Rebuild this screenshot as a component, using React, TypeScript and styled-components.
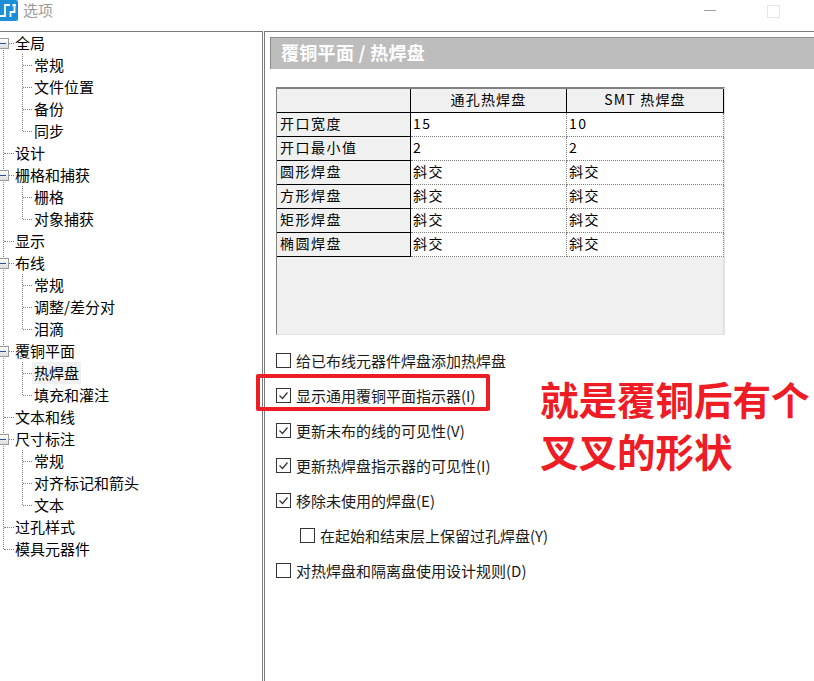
import React from 'react';
import styled, { createGlobalStyle } from 'styled-components';

const colors = {
  border: '#7a7a7a',
  dotted: '#808080',
  headerBg: '#bdbdbd',
  cellBg: '#f0f0f0',
  red: '#ee1c25',
  text: '#000000',
};

const cjk = '"Noto Sans CJK SC", "Liberation Sans", sans-serif';

const GlobalStyle = createGlobalStyle`
  html, body {
    margin: 0;
    padding: 0;
    height: 100%;
    background: #ffffff;
    overflow: hidden;
  }
  #root {
    height: 100%;
  }
`;

const Window = styled.div`
  width: 814px;
  height: 681px;
  display: flex;
  flex-direction: column;
  font-family: ${cjk};
  color: ${colors.text};
  overflow: hidden;
`;

const TitleBar = styled.div`
  height: 31px;
  flex: none;
  display: flex;
  align-items: flex-start;
  gap: 5px;
  box-sizing: border-box;
`;

const AppIcon = styled.svg`
  width: 18px;
  height: 21px;
  flex: none;
`;

const WindowTitle = styled.span`
  font-size: 15px;
  line-height: 20px;
  color: #9b9b9b;
  flex: 1;
`;

const MinimizeButton = styled.div`
  width: 12px;
  height: 1px;
  background: #a0a0a0;
  margin: 10px 46px 0 0;
`;

const MaximizeButton = styled.div`
  width: 11px;
  height: 11px;
  border: 1px solid #e6e6e6;
  margin: 5px 34px 0 0;
`;

const Body = styled.div`
  flex: 1;
  display: flex;
  min-height: 0;
`;

const TreePanel = styled.div`
  width: 263px;
  flex: none;
  box-sizing: border-box;
  border-top: 1px solid ${colors.border};
  border-right: 1px solid ${colors.border};
  overflow: hidden;
`;

const TreeRoot = styled.div`
  position: relative;
  &::before {
    content: '';
    position: absolute;
    left: 3px;
    top: 11px;
    bottom: 11px;
    border-left: 1px dotted ${colors.dotted};
  }
`;

const ChildList = styled.div`
  position: relative;
  &::before {
    content: '';
    position: absolute;
    left: 22px;
    top: 0;
    bottom: 11px;
    border-left: 1px dotted ${colors.dotted};
  }
`;

const TreeRow = styled.div<{ $child?: boolean }>`
  position: relative;
  height: 22px;
  display: flex;
  align-items: center;
  padding-left: ${props => (props.$child ? 34 : 15)}px;
  &::before {
    content: '';
    position: absolute;
    left: ${props => (props.$child ? 23 : 4)}px;
    width: ${props => (props.$child ? 9 : 10)}px;
    top: 11px;
    border-top: 1px dotted ${colors.dotted};
  }
`;

const TreeLabel = styled.span<{ $selected?: boolean }>`
  font-size: 15px;
  line-height: 22px;
  white-space: nowrap;
  background: ${props => (props.$selected ? '#f0f0f0' : 'transparent')};
  margin-left: ${props => (props.$selected ? -2 : 0)}px;
  padding: ${props => (props.$selected ? '0 2px' : '0')};
  position: relative;
`;

const Expander = styled.div`
  position: absolute;
  left: -3px;
  top: 6px;
  width: 10px;
  height: 9px;
  border: 1px solid #9a9a9a;
  background: linear-gradient(#ffffff, #dcdcdc);
  z-index: 1;
  &::after {
    content: '';
    position: absolute;
    left: 2px;
    right: 2px;
    top: 4px;
    height: 1px;
    background: #2b4f9b;
  }
`;

const ContentPanel = styled.div`
  flex: 1;
  margin-left: 1px;
  position: relative;
  box-sizing: border-box;
  border-top: 1px solid ${colors.border};
  border-left: 1px solid ${colors.border};
  padding: 5px 0 0 5px;
`;

const SectionHeader = styled.div`
  height: 32px;
  box-sizing: border-box;
  background: ${colors.headerBg};
  border-top: 1px solid #8c8c8c;
  border-left: 1px solid #8c8c8c;
  padding-left: 10px;
  color: #ffffff;
  font-size: 18px;
  font-weight: 700;
  line-height: 28px;
  letter-spacing: 0.3px;
  white-space: nowrap;
`;

const TableFrame = styled.div`
  width: 449px;
  height: 248px;
  margin: 18px 0 0 6px;
  box-sizing: border-box;
  background: ${colors.cellBg};
  border-top: 2px solid #808080;
  border-left: 1px solid #808080;
  border-right: 2px solid #e2e2e2;
  border-bottom: 1px solid #e2e2e2;
`;

const TableGrid = styled.div`
  display: grid;
  grid-template-columns: 134px 156px 157px;
  grid-auto-rows: 24px;
`;

const HeaderCell = styled.div`
  box-sizing: border-box;
  border-right: 1px solid #000000;
  border-bottom: 1px solid #000000;
  background: ${colors.cellBg};
  text-align: center;
  font-size: 14px;
  line-height: 20px;
  letter-spacing: 1.2px;
`;

const RowHeaderCell = styled.div`
  box-sizing: border-box;
  border-right: 1px solid #000000;
  border-bottom: 1px solid #000000;
  background: ${colors.cellBg};
  padding-left: 3px;
  font-size: 14px;
  line-height: 20px;
  letter-spacing: 1.5px;
`;

const DataCell = styled.div`
  box-sizing: border-box;
  border-right: 1px dotted ${colors.dotted};
  border-bottom: 1px dotted ${colors.dotted};
  background: #ffffff;
  padding-left: 2px;
  font-size: 14px;
  line-height: 20px;
  letter-spacing: 1.5px;
`;

const OptionList = styled.div`
  margin: 8px 0 0 6px;
  display: flex;
  flex-direction: column;
`;

const OptionRow = styled.label<{ $nested?: boolean; $highlight?: boolean }>`
  position: relative;
  height: 35px;
  display: flex;
  align-items: center;
  gap: 5px;
  padding-left: ${props => (props.$nested ? 24 : 0)}px;
  font-size: 15px;
  color: #1a1a1a;
  white-space: nowrap;
  ${props =>
    props.$highlight &&
    `&::after {
      content: '';
      position: absolute;
      left: -20px;
      top: -4px;
      width: 226px;
      height: 29px;
      border: 4px solid ${colors.red};
      border-radius: 2px;
    }`}
`;

const CheckBox = styled.span`
  width: 13px;
  height: 13px;
  flex: none;
  border: 1px solid #333333;
  background: #ffffff;
  display: flex;
  align-items: center;
  justify-content: center;
`;

const CheckMark = styled.svg`
  width: 11px;
  height: 11px;
`;

const Annotation = styled.div`
  position: absolute;
  left: 275px;
  top: 340px;
  color: ${colors.red};
  font-size: 38.5px;
  font-weight: 700;
  line-height: 52px;
  white-space: nowrap;
`;

type TreeNode = { label: string; selected?: boolean; children?: { label: string; selected?: boolean }[] };

const tree: TreeNode[] = [
  { label: '全局', children: [{ label: '常规' }, { label: '文件位置' }, { label: '备份' }, { label: '同步' }] },
  { label: '设计' },
  { label: '栅格和捕获', children: [{ label: '栅格' }, { label: '对象捕获' }] },
  { label: '显示' },
  { label: '布线', children: [{ label: '常规' }, { label: '调整/差分对' }, { label: '泪滴' }] },
  { label: '覆铜平面', children: [{ label: '热焊盘', selected: true }, { label: '填充和灌注' }] },
  { label: '文本和线' },
  { label: '尺寸标注', children: [{ label: '常规' }, { label: '对齐标记和箭头' }, { label: '文本' }] },
  { label: '过孔样式' },
  { label: '模具元器件' },
];

const rows = [
  ['开口宽度', '15', '10'],
  ['开口最小值', '2', '2'],
  ['圆形焊盘', '斜交', '斜交'],
  ['方形焊盘', '斜交', '斜交'],
  ['矩形焊盘', '斜交', '斜交'],
  ['椭圆焊盘', '斜交', '斜交'],
];

const options = [
  { label: '给已布线元器件焊盘添加热焊盘', checked: false },
  { label: '显示通用覆铜平面指示器(I)', checked: true, highlight: true },
  { label: '更新未布的线的可见性(V)', checked: true },
  { label: '更新热焊盘指示器的可见性(I)', checked: true },
  { label: '移除未使用的焊盘(E)', checked: true },
  { label: '在起始和结束层上保留过孔焊盘(Y)', checked: false, nested: true },
  { label: '对热焊盘和隔离盘使用设计规则(D)', checked: false },
];

const App: React.FC = () => {
  return (
    <Window>
      <GlobalStyle />
      <TitleBar>
        <AppIcon viewBox="0 0 18 21">
          <rect x="-3" y="0" width="21" height="21" rx="2" fill="#1c8fd6" />
          <path d="M0 16h5V5h5" fill="none" stroke="#ffffff" strokeWidth="1.8" />
          <path d="M10.5 17v-5h4V7" fill="none" stroke="#ffffff" strokeWidth="1.8" />
          <rect x="12.5" y="4" width="3.4" height="2.6" fill="#ffffff" />
        </AppIcon>
        <WindowTitle>选项</WindowTitle>
        <MinimizeButton />
        <MaximizeButton />
      </TitleBar>
      <Body>
        <TreePanel>
          <TreeRoot>
            {tree.map(node => (
              <div key={node.label}>
                <TreeRow>
                  {node.children && <Expander />}
                  <TreeLabel>{node.label}</TreeLabel>
                </TreeRow>
                {node.children && (
                  <ChildList>
                    {node.children.map(child => (
                      <TreeRow $child key={child.label}>
                        <TreeLabel $selected={child.selected}>{child.label}</TreeLabel>
                      </TreeRow>
                    ))}
                  </ChildList>
                )}
              </div>
            ))}
          </TreeRoot>
        </TreePanel>
        <ContentPanel>
          <SectionHeader>覆铜平面 / 热焊盘</SectionHeader>
          <TableFrame>
            <TableGrid>
              <HeaderCell />
              <HeaderCell>通孔热焊盘</HeaderCell>
              <HeaderCell>SMT 热焊盘</HeaderCell>
              {rows.map(row => (
                <React.Fragment key={row[0]}>
                  <RowHeaderCell>{row[0]}</RowHeaderCell>
                  <DataCell>{row[1]}</DataCell>
                  <DataCell>{row[2]}</DataCell>
                </React.Fragment>
              ))}
            </TableGrid>
          </TableFrame>
          <OptionList>
            {options.map(option => (
              <OptionRow key={option.label} $nested={option.nested} $highlight={option.highlight}>
                <CheckBox>
                  {option.checked && (
                    <CheckMark viewBox="0 0 11 11">
                      <path d="M1.5 5.5l3 3 5-6" fill="none" stroke="#333333" strokeWidth="1.2" />
                    </CheckMark>
                  )}
                </CheckBox>
                {option.label}
              </OptionRow>
            ))}
          </OptionList>
          <Annotation>
            就是覆铜后有个
            <br />
            叉叉的形状
          </Annotation>
        </ContentPanel>
      </Body>
    </Window>
  );
};

export default App;
